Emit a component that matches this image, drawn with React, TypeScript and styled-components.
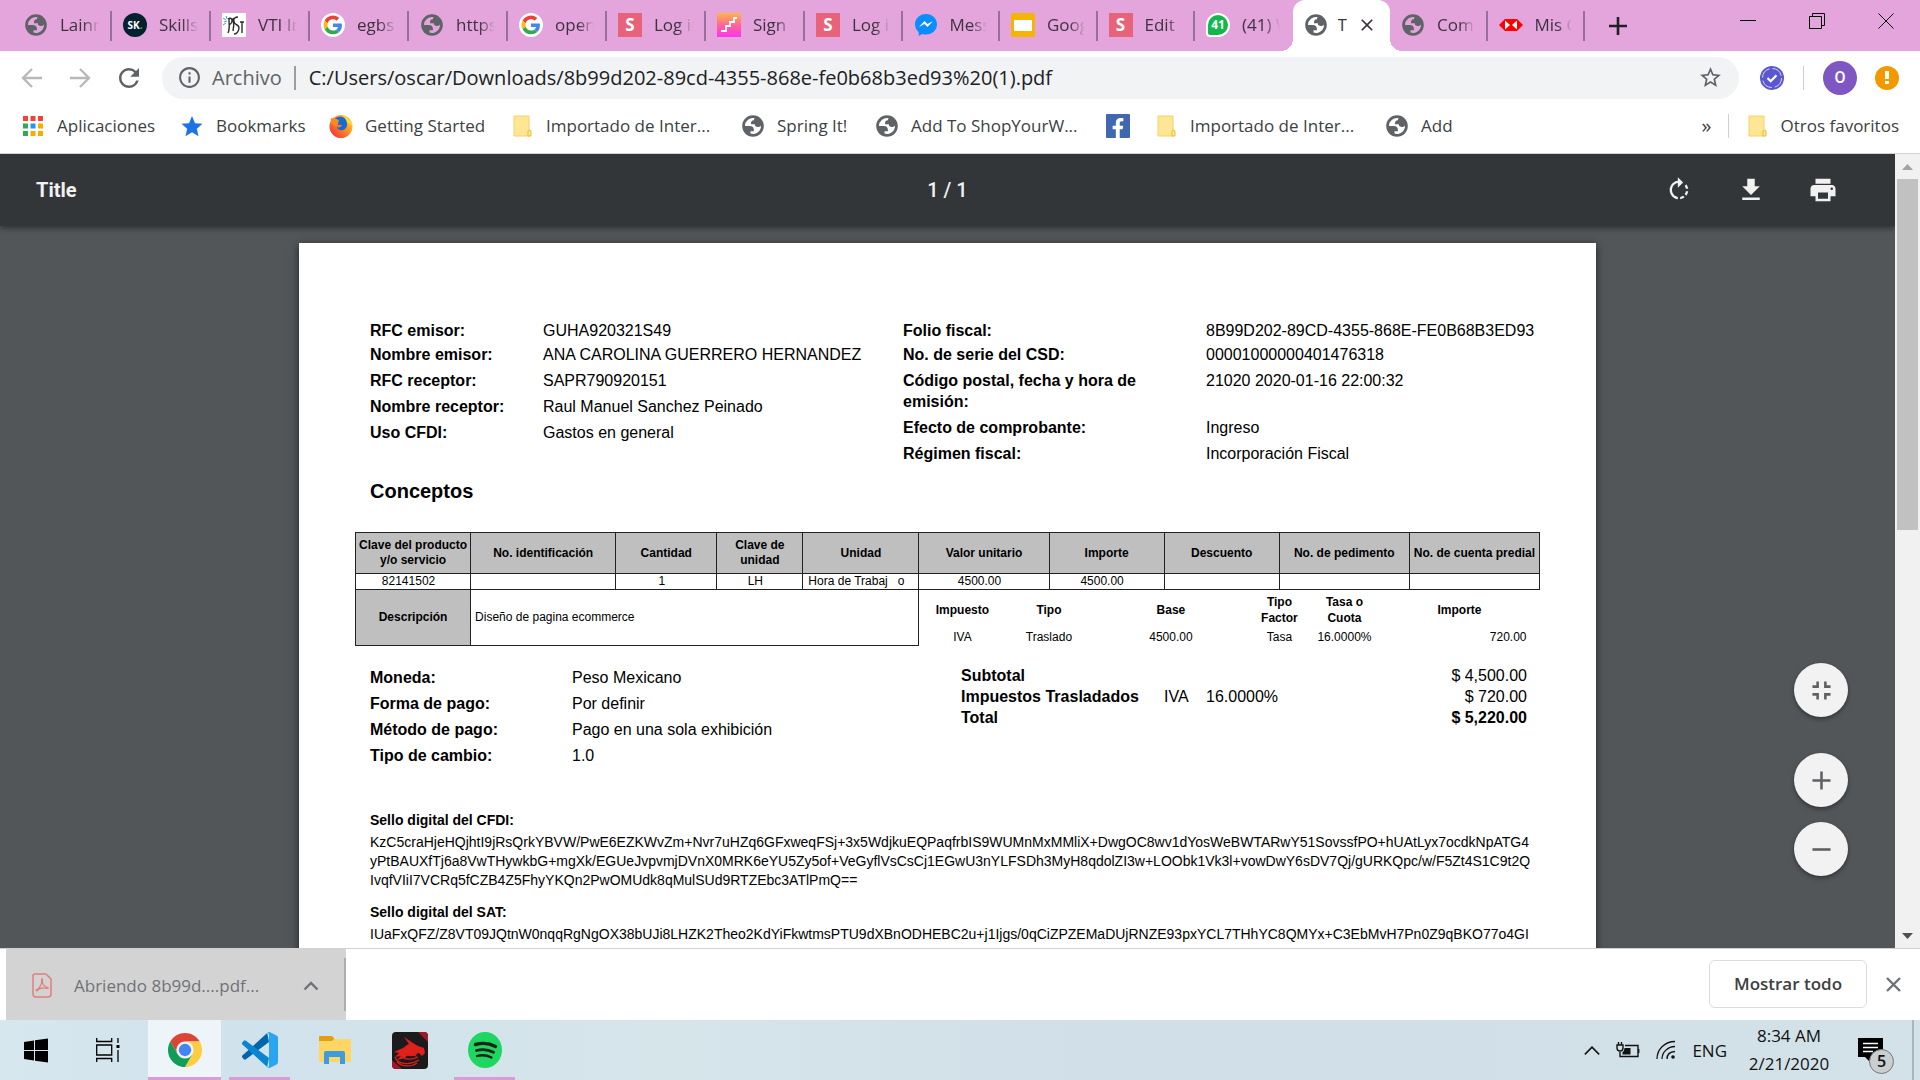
import React from "react";
import styled, { createGlobalStyle, css } from "styled-components";
import { FaFacebookF } from "react-icons/fa";
import { MdStarBorder, MdPrint, MdFileDownload, MdFullscreenExit, MdAdd, MdRemove, MdClose, MdInfoOutline, MdRefresh } from "react-icons/md";

const ui = `"Open Sans", "Noto Sans", sans-serif`;
const arial = `"Liberation Sans", Arial, sans-serif`;

const GlobalStyle = createGlobalStyle`
  * { box-sizing: border-box; }
  html, body { margin: 0; height: 100%; overflow: hidden; }
  body { font-family: ${ui}; font-size: 17px; color: #3c4043; }
  button { font: inherit; color: inherit; border: 0; padding: 0; background: none; }
  svg { display: block; flex: none; }
  dl, dd, h1, h2, h3, p { margin: 0; }
`;

const Screen = styled.div`
  height: 100vh;
  display: flex;
  flex-direction: column;
  background: #fff;
`;

/* ---------- tab strip ---------- */

const TabStrip = styled.header`
  display: flex;
  height: 51px;
  flex: none;
  padding-left: 13px;
  background: #e3a5db;
`;

const Tabs = styled.nav`
  flex: 1;
  max-width: 1572px;
  display: grid;
  grid-template-columns: repeat(8, 198fr) repeat(8, 195fr);
`;

const Tab = styled.button<{ $active?: boolean; $divided?: boolean }>`
  position: relative;
  display: flex;
  align-items: center;
  gap: ${(p) => (p.$active ? 10 : 12)}px;
  min-width: 0;
  padding: 0 13px 2px 11px;
  color: #3d3340;
  text-align: left;
  ${(p) =>
    p.$divided &&
    css`
      &::after {
        content: "";
        position: absolute;
        right: 0;
        top: 11px;
        height: 30px;
        width: 2px;
        background: #96709a;
      }
    `}
  ${(p) =>
    p.$active &&
    css`
      background: #fff;
      border-radius: 12px 12px 0 0;
      &::before,
      &::after {
        content: "";
        position: absolute;
        bottom: 0;
        width: 12px;
        height: 12px;
      }
      &::before {
        left: -12px;
        background: radial-gradient(circle at 0 0, transparent 12px, #fff 12px);
      }
      &::after {
        right: -12px;
        background: radial-gradient(circle at 100% 0, transparent 12px, #fff 12px);
      }
    `}
`;

const TabTitle = styled.span<{ $solid?: boolean }>`
  flex: ${(p) => (p.$solid ? "none" : 1)};
  overflow: hidden;
  white-space: nowrap;
  line-height: 24px;
  ${(p) => !p.$solid && "mask-image: linear-gradient(90deg, #000 60%, transparent);"}
`;

const NewTab = styled.button`
  display: grid;
  place-items: center;
  width: 66px;
  color: #202124;
`;

const WindowControls = styled.div`
  margin-left: auto;
  display: flex;
  height: 42px;
`;

const WindowButton = styled.button`
  width: 69px;
  display: grid;
  place-items: center;
`;

/* ---------- toolbar ---------- */

const Toolbar = styled.div`
  display: flex;
  align-items: center;
  height: 54px;
  flex: none;
  padding: 0 21px 1px 18px;
  color: #5f6368;
`;

const ToolButton = styled.button<{ $dim?: boolean }>`
  width: 48px;
  display: flex;
  opacity: ${(p) => (p.$dim ? 0.45 : 1)};
`;

const Omnibox = styled.form`
  flex: 1;
  display: flex;
  align-items: center;
  height: 42px;
  border-radius: 21px;
  background: #f1f3f4;
  padding: 0 16px 0 15px;
  font-size: 20px;
`;

const OmniLabel = styled.label`
  display: flex;
  align-items: center;
  gap: 10px;
  padding-right: 12px;
`;

const Address = styled.input`
  flex: 1;
  min-width: 0;
  border: 0;
  border-left: 2px solid #9a9da1;
  height: 24px;
  padding: 0 0 0 13px;
  background: none;
  font: inherit;
  color: #202124;
  outline: none;
`;

const ToolbarEnd = styled.div`
  display: flex;
  align-items: center;
  padding-left: 21px;
`;

const Rule = styled.span<{ $space: number }>`
  width: 1px;
  height: 24px;
  margin: 0 ${(p) => p.$space}px;
  background: #ced0d3;
`;

const Avatar = styled.button`
  width: 34px;
  height: 34px;
  margin-right: 18px;
  border-radius: 50%;
  background: #7e57c2;
  color: #fff;
  font: 500 16px Roboto, sans-serif;
`;

const Alert = styled.button`
  width: 24px;
  height: 24px;
  border-radius: 50%;
  background: #f29900;
  display: grid;
  place-items: center;
`;

/* ---------- bookmarks ---------- */

const Bookmarks = styled.nav`
  display: flex;
  align-items: center;
  height: 49px;
  flex: none;
  padding: 0 21px 6px 21px;
  border-bottom: 1px solid #cfd1d3;
`;

const Bookmark = styled.a<{ $w?: number }>`
  display: flex;
  align-items: center;
  gap: 12px;
  flex: none;
  width: ${(p) => (p.$w ? `${p.$w}px` : "auto")};
  color: inherit;
  text-decoration: none;
  white-space: nowrap;
  line-height: 24px;
`;

const Overflow = styled.button`
  margin-left: auto;
  font-size: 20px;
  line-height: 24px;
`;

/* ---------- PDF viewer ---------- */

const Viewer = styled.main`
  flex: 1;
  min-height: 0;
  display: flex;
`;

const Stage = styled.div`
  flex: 1;
  min-width: 0;
  position: relative;
  display: flex;
  flex-direction: column;
  overflow: hidden;
  background: #525659;
`;

const PdfBar = styled.div`
  position: relative;
  z-index: 1;
  flex: none;
  height: 72px;
  padding: 0 36px;
  display: grid;
  grid-template-columns: 1fr auto 1fr;
  align-items: center;
  background: #323639;
  color: #f1f1f1;
  font: 500 20px/24px Roboto, sans-serif;
  box-shadow: 0 2px 6px rgba(0, 0, 0, 0.45);
`;

const PdfTitle = styled.h1`
  font: inherit;
  font-weight: 700;
`;

const PdfActions = styled.div`
  display: flex;
  justify-content: flex-end;
  gap: 42px;
  padding-right: 21px;
`;

const PdfAction = styled.button`
  width: 30px;
  height: 30px;
  display: grid;
  place-items: center;
`;

const Paper = styled.article`
  flex: none;
  align-self: center;
  width: 1297px;
  max-width: 100%;
  margin-top: 17px;
  padding: 77px 56px;
  background: #fff;
  color: #000;
  font: 16px/21px ${arial};
  box-shadow: 0 2px 8px rgba(0, 0, 0, 0.6);
`;

const Heads = styled.section`
  padding: 0 15px;
  display: grid;
  grid-template-columns: 533px 1fr;
`;

const Facts = styled.dl<{ $label: number; $tight?: boolean }>`
  & > div {
    display: grid;
    grid-template-columns: ${(p) => p.$label}px 1fr;
    padding-bottom: 5px;
  }
  ${(p) => p.$tight && "& > div:first-child { padding-bottom: 3px; }"}
  dt {
    font-weight: bold;
    padding-right: 60px;
    white-space: nowrap;
  }
  dd {
    white-space: nowrap;
  }
`;

const Conceptos = styled.h2`
  margin: 10px 15px 29px;
  font: bold 20px/24px ${arial};
`;

const Items = styled.table`
  width: 100%;
  table-layout: fixed;
  border-collapse: collapse;
  font-size: 12px;
  line-height: 15px;
  & > tbody > tr > td,
  & > tbody > tr > th,
  & > thead > tr > th {
    border: 1px solid #222;
    padding: 0;
    text-align: center;
  }
  & > thead > tr > th,
  & > tbody > tr > th {
    background: #bfbfbf;
  }
  & > thead > tr {
    height: 41px;
  }
`;

const ItemRow = styled.tr`
  height: 16px;
  white-space: pre;
  && > td {
    padding-right: 9px;
  }
`;

const DescRow = styled.tr`
  height: 56px;
  && > td {
    text-align: left;
    padding-left: 4px;
  }
  && > td:last-child {
    border-right: 0;
    border-bottom: 0;
    padding: 0;
    vertical-align: top;
  }
`;

const Taxes = styled.table`
  width: 100%;
  table-layout: fixed;
  border-collapse: collapse;
  text-align: center;
  th,
  td {
    padding: 0;
  }
  thead tr {
    height: 40px;
  }
  th {
    line-height: 16px;
  }
  td:last-child {
    text-align: right;
    padding-right: 13px;
  }
`;

const Sums = styled.section`
  margin-top: 19px;
  padding: 0 13px 0 15px;
  display: grid;
  grid-template-columns: 591px 1fr;
`;

const Payment = styled.div`
  padding-top: 2px;
`;

const Totals = styled.table`
  width: 100%;
  align-self: start;
  border-collapse: collapse;
  th,
  td {
    padding: 0;
    text-align: left;
  }
  td:last-child {
    text-align: right;
  }
`;

const Seal = styled.section<{ $first?: boolean }>`
  margin: ${(p) => (p.$first ? 40 : 13)}px 15px 0;
  font-size: 14px;
  h3 {
    font-size: 14px;
    line-height: 18px;
    margin-bottom: 4px;
  }
  p {
    line-height: 19px;
    white-space: nowrap;
  }
`;

const Zoomers = styled.div`
  position: absolute;
  right: 47px;
  bottom: 72px;
  display: flex;
  flex-direction: column;
  gap: 15px;
`;

const RoundButton = styled.button<{ $apart?: boolean }>`
  width: 54px;
  height: 54px;
  margin-bottom: ${(p) => (p.$apart ? 21 : 0)}px;
  border-radius: 50%;
  background: #f2f2f2;
  color: #5f6062;
  display: grid;
  place-items: center;
  box-shadow: 0 2px 4px rgba(0, 0, 0, 0.4);
`;

const ScrollTrack = styled.div`
  width: 25px;
  flex: none;
  display: flex;
  flex-direction: column;
  justify-content: space-between;
  background: #f1f1f1;
`;

const ScrollArrow = styled.button`
  height: 25px;
  display: grid;
  place-items: center;
`;

const ScrollThumb = styled.div`
  width: 21px;
  height: 351px;
  margin: 0 2px auto;
  background: #c1c1c1;
`;

/* ---------- download shelf ---------- */

const Shelf = styled.footer`
  flex: none;
  height: 72px;
  padding: 0 19px 0 6px;
  border-top: 1px solid #cfd1d3;
  display: flex;
  align-items: center;
  background: #fff;
`;

const Download = styled.div`
  position: relative;
  align-self: stretch;
  width: 340px;
  display: flex;
  align-items: center;
  padding: 2px 27px 0 26px;
  background: #d3d3d3;
  color: #6f7276;
  &::after {
    content: "";
    position: absolute;
    right: 0;
    top: 9px;
    bottom: 9px;
    width: 2px;
    background: #adadad;
  }
`;

const DownloadName = styled.button`
  display: flex;
  align-items: center;
  gap: 22px;
  margin-right: auto;
  white-space: nowrap;
`;

const ShowAll = styled.button`
  margin: 0 19px 2px auto;
  width: 158px;
  height: 48px;
  border: 1px solid #dadce0;
  border-radius: 6px;
  font-weight: 600;
  color: #3c4043;
`;

/* ---------- taskbar ---------- */

const Taskbar = styled.footer`
  flex: none;
  height: 60px;
  display: flex;
  background: linear-gradient(90deg, #d6e7ee, #d0e2ec 12%, #d6e5ea 35%, #d0dfe8 60%, #d3e2e8);
  color: #111;
`;

const TaskButton = styled.button<{ $state?: "open" | "front"; $w: number }>`
  width: ${(p) => p.$w}px;
  display: grid;
  place-items: center;
  position: relative;
  background: ${(p) => (p.$state === "front" ? "#eef5f9" : "none")};
  &::after {
    content: "";
    display: ${(p) => (p.$state ? "block" : "none")};
    position: absolute;
    bottom: 0;
    left: ${(p) => (p.$state === "front" ? 0 : 6)}px;
    right: ${(p) => (p.$state === "front" ? 0 : 6)}px;
    height: 3px;
    background: #dd9ad8;
  }
`;

const Apps = styled.div`
  display: flex;
`;

const Pinned = styled.div`
  display: flex;
  gap: 2px;
  padding-left: 4px;
`;

const Tray = styled.div`
  margin-left: auto;
  display: flex;
  align-items: center;
  padding-right: 6px;
`;

const TrayItem = styled.button<{ $gap: number }>`
  margin-right: ${(p) => p.$gap}px;
  position: relative;
`;

const Clock = styled.button`
  width: 94px;
  margin-right: 22px;
  text-align: center;
  line-height: 28px;
  time {
    display: block;
  }
`;

const Count = styled.span`
  position: absolute;
  left: 11px;
  top: 11px;
  width: 25px;
  height: 25px;
  border: 1px solid #777;
  border-radius: 50%;
  background: #c9ced1;
  font: 600 16px/22px ${ui};
  text-align: center;
`;

const PeekEdge = styled.span`
  align-self: stretch;
  width: 2px;
  background: #a9b4bb;
`;

/* ---------- drawings ---------- */

const Globe = () => (
  <svg width="24" height="24" viewBox="0 0 24 24" fill="#5f6368" fillRule="evenodd">
    <path d="M1.2 12C1.2 6 6 1.200 12 1.200S22.800 6 22.800 12 18 22.800 12 22.800 1.200 18 1.200 12zM4 12h4.400c3.407.022 4.922 1.730 4.543 5.127H9.488v2.470a8.004 8.004 0 0 0 10.498-8.080C19.327 12.504 18.332 13 17 13c-2.137 0-3.206-.916-3.206-2.750h-3.748c-.274-2.728.683-4.092 2.870-4.092 0-.975.327-1.597.811-1.970A8.004 8.004 0 0 0 4 12z" />
  </svg>
);

const GoogleG = () => (
  <svg width="24" height="24" viewBox="0 0 24 24">
    <circle cx="12" cy="12" r="12" fill="#fff" />
    <g transform="translate(2.600 2.600) scale(.39)">
      <path fill="#EA4335" d="M24 9.500c3.540 0 6.710 1.220 9.210 3.600l6.850-6.850C35.900 2.380 30.470 0 24 0 14.620 0 6.510 5.380 2.560 13.220l7.980 6.190C12.430 13.720 17.740 9.500 24 9.500z" />
      <path fill="#4285F4" d="M46.980 24.550c0-1.570-.15-3.090-.38-4.550H24v9.020h12.940c-.58 2.960-2.260 5.480-4.780 7.180l7.730 6c4.510-4.180 7.090-10.360 7.090-17.650z" />
      <path fill="#FBBC05" d="M10.530 28.590c-.48-1.450-.76-2.990-.76-4.590s.27-3.140.76-4.590l-7.980-6.190C.92 16.460 0 20.120 0 24s.92 7.540 2.560 10.780l7.970-6.190z" />
      <path fill="#34A853" d="M24 48c6.480 0 11.930-2.130 15.890-5.810l-7.730-6c-2.150 1.450-4.920 2.300-8.160 2.300-6.260 0-11.570-4.220-13.470-9.910l-7.980 6.190C6.510 42.620 14.620 48 24 48z" />
    </g>
  </svg>
);

const Tile = styled.span<{ $bg: string; $round?: boolean; $size?: number }>`
  width: 24px;
  height: 24px;
  flex: none;
  border-radius: ${(p) => (p.$round ? "50%" : "0")};
  background: ${(p) => p.$bg};
  color: #fff;
  font: 700 ${(p) => p.$size || 17}px/24px ${ui};
  text-align: center;
  i {
    font-style: normal;
    color: #1dd05d;
  }
`;

const FacebookTile = styled(Tile)`
  display: flex;
  align-items: flex-end;
  justify-content: flex-end;
  padding-right: 2px;
  border-radius: 1px;
`;

const SkIcon = () => (
  <Tile $bg="#05202e" $round $size={10}>
    SK<i>.</i>
  </Tile>
);
const SIcon = () => <Tile $bg="#e8637a">S</Tile>;

const VtiIcon = () => (
  <svg width="24" height="24" viewBox="0 0 24 24" fill="none" stroke="#2b2b2b">
    <rect width="24" height="24" fill="#fff" stroke="none" />
    <path d="M6 6c4-3 6 3 1 6M7 6c0 6 1 10-1 14M16 4c-6 0-5 6-1 8s1 9-3 9M20 9v11M18 9h4M11 5c1 5 1 9 0 13" strokeWidth="1.400" />
    <path d="M1 5l3 2M2 9l3-1M4 3l1 3M1 12l3-2" stroke="#4a9fb5" />
  </svg>
);

const StairIcon = () => (
  <svg width="24" height="24" viewBox="0 0 24 24">
    <defs>
      <linearGradient id="stair" x2="0" y2="1">
        <stop offset="0" stopColor="#ffb648" />
        <stop offset=".55" stopColor="#ff5f9e" />
        <stop offset="1" stopColor="#ff35f0" />
      </linearGradient>
    </defs>
    <rect width="24" height="24" fill="url(#stair)" />
    <path d="M4 18h5v-5h4V9h4V5h3" fill="none" stroke="#fff" strokeWidth="1.800" />
  </svg>
);

const Messenger = () => (
  <svg width="24" height="24" viewBox="0 0 24 24">
    <path d="M12 1C5.800 1 1 5.500 1 11.300c0 3.200 1.400 6 3.700 7.900V23l3.600-2c1.100.4 2.400.5 3.700.5 6.200 0 11-4.500 11-10.200S18.200 1 12 1z" fill="#0a8dff" />
    <path d="M5 14l5.500-6 3 3L19 8l-5.500 6-3-3z" fill="#fff" />
  </svg>
);

const Slides = () => (
  <svg width="24" height="24" viewBox="0 0 24 24">
    <rect width="24" height="24" rx="2" fill="#f5b400" />
    <rect x="3" y="7" width="18" height="11" fill="#fff" />
  </svg>
);

const WhatsBadge = styled(Tile)`
  border: 2px solid #fff;
  border-bottom-left-radius: 4px;
  line-height: 20px;
`;

const Hsbc = () => (
  <svg width="24" height="24" viewBox="0 0 24 24">
    <path d="M6 6h12l6 6-6 6H6l-6-6z" fill="#f00" />
    <path d="M6 7.500l5 4.500-5 4.500zM18 7.500v9L13 12z" fill="#fff" />
  </svg>
);

const Folder = () => (
  <svg width="24" height="24" viewBox="0 0 24 24">
    <path d="M4 2h15v20H4z" fill="#ffe694" stroke="#f5d265" />
    <path d="M18 22v-5q2-2 3 0v5z" fill="#ffe694" stroke="#e8bd3a" />
  </svg>
);

const Firefox = () => (
  <svg width="24" height="24" viewBox="0 0 24 24">
    <defs>
      <linearGradient id="fox" x1="1" y1="0" x2="0" y2="1">
        <stop offset="0" stopColor="#ffe14a" />
        <stop offset=".4" stopColor="#ff9a1f" />
        <stop offset="1" stopColor="#f0203c" />
      </linearGradient>
    </defs>
    <circle cx="12" cy="12.500" r="11.500" fill="url(#fox)" />
    <path d="M15 0c0 4 8 5 8.500 12L17 8z" fill="#ffd93b" />
    <path d="M6 5C9 1 15 2 17 6c2 4 1 9-3 10-3 1-6-1-6-3 2 1 4 0 5-2H9C8 9 9 8 10 7 9 5 7 5 6 5z" fill="#1769d8" />
    <path d="M2 4l4 2c3 0 4 2 3 4L6 12C3 11 1 8 2 4z" fill="#ff8a1c" />
  </svg>
);

const appColors = ["#f44336", "#f44336", "#f44336", "#34a853", "#2196f3", "#fbab00", "#34a853", "#fbab00", "#fbab00"];
const AppsGrid = () => (
  <svg width="24" height="24" viewBox="0 0 24 24">
    {appColors.map((c, i) => (
      <rect key={i} x={2 + (i % 3) * 7.5} y={2 + Math.floor(i / 3) * 7.5} width="5" height="5" fill={c} />
    ))}
  </svg>
);

const Arrow = ({ flip }: { flip?: boolean }) => (
  <svg width="28" height="28" viewBox="0 0 28 28" fill="none" stroke="#5f6368" strokeWidth="2.400">
    <path d={flip ? "M4 14h19M14 5l9 9-9 9" : "M24 14H5M14 5l-9 9 9 9"} />
  </svg>
);

const RotateIcon = () => (
  <svg width="28" height="28" viewBox="0 0 24 24" fill="#f1f1f1">
    <path d="M15.550 5.550L11 1v3.070C7.060 4.560 4 7.920 4 12s3.050 7.440 7 7.930v-2.020c-2.840-.48-5-2.940-5-5.910s2.160-5.430 5-5.910V10l4.550-4.450zM19.930 11c-.17-1.390-.72-2.730-1.620-3.890l-1.420 1.420c.54.75.88 1.600 1.020 2.470h2.020zM13 17.900v2.020c1.390-.17 2.740-.71 3.900-1.610l-1.440-1.440c-.75.540-1.590.890-2.460 1.030zm3.890-2.420l1.420 1.410c.9-1.160 1.450-2.500 1.620-3.890h-2.020c-.14.870-.48 1.720-1.020 2.480z" />
  </svg>
);

const PdfFile = () => (
  <svg width="20" height="25" viewBox="0 0 20 25" fill="none" stroke="#e07f7c" strokeWidth="1.500">
    <path d="M3 1h11l5 5v15q0 3-3 3H4q-3 0-3-3V3q0-2 2-2z" />
    <path d="M4 17c6-3 6-7 5.500-10.500 0-1 1.500-1 1 1C10 11 12 14 16 14.500c1 1-1 1.500-3 .5-3-.5-6 .5-8 3-1 0-1-.5-1-1z" strokeWidth="1.100" />
  </svg>
);

const Caret = ({ w, t }: { w: number; t: number }) => (
  <svg width={w} height={w / 2 + 2} viewBox="0 0 16 10" fill="none" stroke="currentColor" strokeWidth={t}>
    <path d="M1.500 8.500L8 2l6.500 6.500" />
  </svg>
);

const WinLogo = () => (
  <svg width="24" height="25" viewBox="0 0 24 25" fill="#000">
    <path d="M0 4l10-1.500V12H0zM11 2.300L24 .5V12H11zM0 13h10v9.500L0 21zM11 13h13v11.500L11 22.700z" />
  </svg>
);

const TaskView = () => (
  <svg width="24" height="24" viewBox="0 0 24 24" fill="none" stroke="#000" strokeWidth="1.300">
    <path d="M.7 0v3.500h15V0M.7 24v-3.500h15V24M.7 7h15v10H.7zM22 0v5M22 12v12" />
    <rect x="20.500" y="7" width="3" height="3" fill="#000" stroke="none" />
  </svg>
);

const ChromeLogo = () => (
  <svg width="34" height="34" viewBox="2 2 44 44">
    <path d="M4.950 13A22 22 0 0 1 43.050 13H24A11 11 0 0 0 14.470 29.500z" fill="#db4437" />
    <path d="M43.050 13A22 22 0 0 1 24 46L33.530 29.500A11 11 0 0 0 24 13z" fill="#ffcd40" />
    <path d="M24 46A22 22 0 0 1 4.950 13L14.470 29.500A11 11 0 0 0 33.530 29.500z" fill="#0f9d58" />
    <circle cx="24" cy="24" r="10.500" fill="#f1f1f1" />
    <circle cx="24" cy="24" r="8" fill="#4285f4" />
  </svg>
);

const VsCode = () => (
  <svg width="36" height="36" viewBox="0 0 100 100">
    <path d="M75 28L11 76q-3 2-6 0l-4-5q-3-3 0-6L70 3z" fill="#0065a9" />
    <path d="M75 72L11 24q-3-2-6 0l-4 5q-3 3 0 6l69 62z" fill="#0a86d1" />
    <path d="M70 3q4-4 8-2l18 9q4 2 4 6v68q0 4-4 6l-18 9q-4 2-8-2 5 2 5-4V7q0-6-5-4z" fill="#2aa5f2" />
  </svg>
);

const Explorer = () => (
  <svg width="32" height="28" viewBox="0 0 32 28">
    <path d="M0 1q0-1 1-1h12l2 2v3H0z" fill="#e0a010" />
    <path d="M0 5h13l2-2h16q1 0 1 1v21q0 1-1 1H1q-1 0-1-1z" fill="#ffd664" />
    <path d="M5 28V17q0-2 2-2h17q2 0 2 2v11h-5v-7H10v7z" fill="#3d9be0" />
  </svg>
);

const Dragon = () => (
  <svg width="36" height="37" viewBox="0 0 36 37">
    <rect width="36" height="37" rx="4" fill="#1c1a1b" />
    <path d="M26 0h6q4 0 4 4v6zM0 28v5q0 4 4 4h6z" fill="#a01828" />
    <path d="M2 20l9-4 4-3 2-1-5-7 9 6 5 3 6 2 1 5-3 3-3-3-4 1 2 3-5-2c-4 0-6 1-7 3l-8 2 4-4-6 1 4-4z" fill="#e0201b" />
    <path d="M3 25c2 7 14 9 24 3M5 30c5 5 15 5 20 1M9 24c4 4 11 4 17 1M14 22c3 2 7 2 11 0" fill="none" stroke="#d81f1b" strokeWidth="1.300" />
  </svg>
);

const Spotify = () => (
  <svg width="34" height="36" viewBox="0 0 34 36" fill="none" stroke="#14221a" strokeLinecap="round">
    <ellipse cx="17" cy="18" rx="17" ry="18" fill="#1ed760" stroke="none" />
    <path d="M7.500 12.500c7-2 14-1.300 20 2" strokeWidth="3.400" />
    <path d="M8.500 18.500c6-1.600 12-1 17 1.800" strokeWidth="2.800" />
    <path d="M9 24c5-1.300 10-.8 14.500 1.500" strokeWidth="2.300" />
  </svg>
);

const Battery = () => (
  <svg width="25" height="18" viewBox="0 0 25 18" fill="none" stroke="#111" strokeWidth="1.400">
    <path d="M9 4.500h13v11H4V11M22.700 8v4M1 4h6v3q0 3-3 3t-3-3zM2.500 1v3M5.500 1v3" />
    <path d="M8.500 7h6v6.500h-8V11q2-1 2-4z" fill="#111" stroke="none" />
  </svg>
);

const Wifi = () => (
  <svg width="20" height="20" viewBox="0 0 20 20" fill="none" stroke="#111" strokeWidth="1.300">
    <path d="M1 19C1 9 9 1.500 19 1.500M6 19C6 12 12 6.500 19 6.500M11 19q0-7 8-7.500" />
    <circle cx="17" cy="17" r="1.800" fill="#111" stroke="none" />
  </svg>
);

const Note = () => (
  <svg width="25" height="24" viewBox="0 0 25 24">
    <path d="M0 0h25v19H14l-2 5-5-5H0z" fill="#000" />
    <path d="M5 5.500h15M5 9.500h15M5 13.500h10" stroke="#fff" strokeWidth="1.300" />
  </svg>
);

const SecureBadge = () => (
  <svg width="24" height="24" viewBox="0 0 24 24" fill="none">
    <circle cx="12" cy="12" r="12" fill="#5a57d0" />
    <circle cx="12" cy="12" r="9.500" stroke="#d7d6f7" strokeDasharray="12 3" />
    <path d="M7.500 12l3.200 3.200 5.800-6" stroke="#fff" strokeWidth="2.200" />
  </svg>
);

/* ---------- data ---------- */

const tabs: { title: string; icon: React.ReactNode; active?: boolean; divided?: boolean }[] = [
  { title: "Lainn", icon: <Globe />, divided: true },
  { title: "Skills", icon: <SkIcon />, divided: true },
  { title: "VTI In", icon: <VtiIcon />, divided: true },
  { title: "egbs", icon: <GoogleG />, divided: true },
  { title: "https", icon: <Globe />, divided: true },
  { title: "open", icon: <GoogleG />, divided: true },
  { title: "Log in", icon: <SIcon />, divided: true },
  { title: "Sign", icon: <StairIcon />, divided: true },
  { title: "Log in", icon: <SIcon />, divided: true },
  { title: "Mess", icon: <Messenger />, divided: true },
  { title: "Goog", icon: <Slides />, divided: true },
  { title: "Edit", icon: <SIcon />, divided: true },
  { title: "(41) W", icon: <WhatsBadge $bg="#12b84a" $round $size={12}>41</WhatsBadge> },
  { title: "T", icon: <Globe />, active: true },
  { title: "Com", icon: <Globe />, divided: true },
  { title: "Mis C", icon: <Hsbc />, divided: true },
];

const bookmarks: { label?: string; icon: React.ReactNode; w: number }[] = [
  { label: "Aplicaciones", icon: <AppsGrid />, w: 159 },
  {
    label: "Bookmarks",
    w: 149,
    icon: (
      <svg width="24" height="24" viewBox="0 0 24 24" fill="#1a73e8">
        <path d="M12 2l3 7.200 7.500.6-5.700 5 1.700 7.500L12 18.300l-6.500 4 1.700-7.500-5.700-5L9 9.200z" />
      </svg>
    ),
  },
  { label: "Getting Started", icon: <Firefox />, w: 181 },
  { label: "Importado de Inter...", icon: <Folder />, w: 231 },
  { label: "Spring It!", icon: <Globe />, w: 134 },
  { label: "Add To ShopYourW...", icon: <Globe />, w: 231 },
  { icon: <FacebookTile $bg="#4267b2"><FaFacebookF size={20} /></FacebookTile>, w: 48 },
  { label: "Importado de Inter...", icon: <Folder />, w: 231 },
  { label: "Add", icon: <Globe />, w: 80 },
];

const emisor = [
  ["RFC emisor:", "GUHA920321S49"],
  ["Nombre emisor:", "ANA CAROLINA GUERRERO HERNANDEZ"],
  ["RFC receptor:", "SAPR790920151"],
  ["Nombre receptor:", "Raul Manuel Sanchez Peinado"],
  ["Uso CFDI:", "Gastos en general"],
];
const folio = [
  ["Folio fiscal:", "8B99D202-89CD-4355-868E-FE0B68B3ED93"],
  ["No. de serie del CSD:", "00001000000401476318"],
  ["Código postal, fecha y hora de\nemisión:", "21020 2020-01-16 22:00:32"],
  ["Efecto de comprobante:", "Ingreso"],
  ["Régimen fiscal:", "Incorporación Fiscal"],
];
const pago = [
  ["Moneda:", "Peso Mexicano"],
  ["Forma de pago:", "Por definir"],
  ["Método de pago:", "Pago en una sola exhibición"],
  ["Tipo de cambio:", "1.0"],
];

const columns: [string, number][] = [
  ["Clave del producto\ny/o servicio", 115],
  ["No. identificación", 145],
  ["Cantidad", 101],
  ["Clave de\nunidad", 86],
  ["Unidad", 116],
  ["Valor unitario", 130],
  ["Importe", 115],
  ["Descuento", 115],
  ["No. de pedimento", 130],
  ["No. de cuenta predial", 130],
];
const item = ["82141502", "", "1", "LH", "Hora de Trabaj\u00a0\u00a0\u00a0o", "4500.00", "4500.00", "", "", ""];

const taxColumns: [string, number][] = [
  ["Impuesto", 86],
  ["Tipo", 87],
  ["Base", 157],
  ["Tipo\nFactor", 60],
  ["Tasa o\nCuota", 70],
  ["Importe", 160],
];
const tax = ["IVA", "Traslado", "4500.00", "Tasa", "16.0000%", "720.00"];

const Lines = ({ text }: { text: string }) => (
  <>
    {text.split("\n").map((l, i) => (
      <React.Fragment key={i}>
        {i > 0 && <br />}
        {l}
      </React.Fragment>
    ))}
  </>
);

const FactList = ({ rows, label, tight }: { rows: string[][]; label: number; tight?: boolean }) => (
  <Facts $label={label} $tight={tight}>
    {rows.map(([k, v]) => (
      <div key={k}>
        <dt>
          <Lines text={k} />
        </dt>
        <dd>{v}</dd>
      </div>
    ))}
  </Facts>
);

export default function App() {
  return (
    <Screen>
      <GlobalStyle />
      <TabStrip>
        <Tabs>
          {tabs.map((t, i) => (
            <Tab key={i} $active={t.active} $divided={t.divided}>
              {t.icon}
              <TabTitle $solid={t.active}>{t.title}</TabTitle>
              {t.active && <MdClose size={20} />}
            </Tab>
          ))}
        </Tabs>
        <NewTab aria-label="Nueva pestaña">
          <svg width="18" height="18" viewBox="0 0 18 18" stroke="currentColor" strokeWidth="2.600">
            <path d="M9 0v18M0 9h18" />
          </svg>
        </NewTab>
        <WindowControls>
          <WindowButton aria-label="Minimizar">
            <svg width="16" height="16" stroke="#000"><path d="M0 7.500h16" /></svg>
          </WindowButton>
          <WindowButton aria-label="Restaurar">
            <svg width="16" height="16" fill="none" stroke="#000"><path d="M.5 3.500h12v12H.5zM3.500 3.500v-3h12v12h-3" /></svg>
          </WindowButton>
          <WindowButton aria-label="Cerrar">
            <svg width="16" height="16" stroke="#000"><path d="M.5.5l15 15M15.500.5l-15 15" /></svg>
          </WindowButton>
        </WindowControls>
      </TabStrip>

      <Toolbar>
        <ToolButton $dim aria-label="Atrás"><Arrow /></ToolButton>
        <ToolButton $dim aria-label="Adelante"><Arrow flip /></ToolButton>
        <ToolButton aria-label="Recargar"><MdRefresh size={30} /></ToolButton>
        <Omnibox>
          <OmniLabel htmlFor="address">
            <MdInfoOutline size={25} />
            Archivo
          </OmniLabel>
          <Address id="address" readOnly value="C:/Users/oscar/Downloads/8b99d202-89cd-4355-868e-fe0b68b3ed93%20(1).pdf" />
          <MdStarBorder size={25} />
        </Omnibox>
        <ToolbarEnd>
          <SecureBadge />
          <Rule $space={19} />
          <Avatar>O</Avatar>
          <Alert aria-label="Actualizar">
            <svg width="4" height="13" fill="#fff"><path d="M0 0h4v8H0zM0 10h4v3H0z" /></svg>
          </Alert>
        </ToolbarEnd>
      </Toolbar>

      <Bookmarks>
        {bookmarks.map((b, i) => (
          <Bookmark key={i} href="#" $w={b.w} aria-label={b.label || "Facebook"}>
            {b.icon}
            {b.label}
          </Bookmark>
        ))}
        <Overflow>»</Overflow>
        <Rule $space={16} />
        <Bookmark href="#">
          <Folder />
          Otros favoritos
        </Bookmark>
      </Bookmarks>

      <Viewer>
        <Stage>
          <PdfBar>
            <PdfTitle>Title</PdfTitle>
            <span>1 / 1</span>
            <PdfActions>
              <PdfAction aria-label="Girar"><RotateIcon /></PdfAction>
              <PdfAction aria-label="Descargar"><MdFileDownload size={30} /></PdfAction>
              <PdfAction aria-label="Imprimir"><MdPrint size={30} /></PdfAction>
            </PdfActions>
          </PdfBar>
          <Paper>
            <Heads>
              <FactList rows={emisor} label={173} tight />
              <FactList rows={folio} label={303} tight />
            </Heads>
            <Conceptos>Conceptos</Conceptos>
            <Items>
              <colgroup>
                {columns.map(([n, w]) => <col key={n} width={w} />)}
              </colgroup>
              <thead>
                <tr>
                  {columns.map(([n]) => <th key={n}><Lines text={n} /></th>)}
                </tr>
              </thead>
              <tbody>
                <ItemRow>
                  {item.map((v, i) => <td key={i}>{v}</td>)}
                </ItemRow>
                <DescRow>
                  <th>Descripción</th>
                  <td colSpan={4}>Diseño de pagina ecommerce</td>
                  <td colSpan={5}>
                    <Taxes>
                      <colgroup>
                        {taxColumns.map(([n, w]) => <col key={n} width={w} />)}
                      </colgroup>
                      <thead>
                        <tr>{taxColumns.map(([n]) => <th key={n}><Lines text={n} /></th>)}</tr>
                      </thead>
                      <tbody>
                        <tr>{tax.map((v) => <td key={v}>{v}</td>)}</tr>
                      </tbody>
                    </Taxes>
                  </td>
                </DescRow>
              </tbody>
            </Items>
            <Sums>
              <Payment>
                <FactList rows={pago} label={202} />
              </Payment>
              <Totals>
                <colgroup>
                  <col width={203} />
                  <col width={42} />
                  <col />
                  <col />
                </colgroup>
                <tbody>
                  <tr><th colSpan={3}>Subtotal</th><td>$ 4,500.00</td></tr>
                  <tr><th>Impuestos Trasladados</th><td>IVA</td><td>16.0000%</td><td>$ 720.00</td></tr>
                  <tr><th colSpan={3}>Total</th><td><b>$ 5,220.00</b></td></tr>
                </tbody>
              </Totals>
            </Sums>
            <Seal $first>
              <h3>Sello digital del CFDI:</h3>
              <p>
                KzC5craHjeHQjhtI9jRsQrkYBVW/PwE6EZKWvZm+Nvr7uHZq6GFxweqFSj+3x5WdjkuEQPaqfrbIS9WUMnMxMMliX+DwgOC8wv1dYosWeBWTARwY51SovssfPO+hUAtLyx7ocdkNpATG4
                <br />
                yPtBAUXfTj6a8VwTHywkbG+mgXk/EGUeJvpvmjDVnX0MRK6eYU5Zy5of+VeGyflVsCsCj1EGwU3nYLFSDh3MyH8qdolZI3w+LOObk1Vk3l+vowDwY6sDV7Qj/gURKQpc/w/F5Zt4S1C9t2Q
                <br />
                IvqfVIiI7VCRq5fCZB4Z5FhyYKQn2PwOMUdk8qMulSUd9RTZEbc3ATlPmQ==
              </p>
            </Seal>
            <Seal>
              <h3>Sello digital del SAT:</h3>
              <p>
                IUaFxQFZ/Z8VT09JQtnW0nqqRgNgOX38bUJi8LHZK2Theo2KdYiFkwtmsPTU9dXBnODHEBC2u+j1Ijgs/0qCiZPZEMaDUjRNZE93pxYCL7THhYC8QMYx+C3EbMvH7Pn0Z9qBKO77o4GI
              </p>
            </Seal>
          </Paper>
          <Zoomers>
            <RoundButton $apart aria-label="Ajustar"><MdFullscreenExit size={31} /></RoundButton>
            <RoundButton aria-label="Acercar"><MdAdd size={31} /></RoundButton>
            <RoundButton aria-label="Alejar"><MdRemove size={31} /></RoundButton>
          </Zoomers>
        </Stage>
        <ScrollTrack>
          <ScrollArrow aria-label="Arriba"><svg width="11" height="6" fill="#a3a3a3"><path d="M0 6l5.500-6L11 6z" /></svg></ScrollArrow>
          <ScrollThumb />
          <ScrollArrow aria-label="Abajo"><svg width="11" height="6" fill="#505050"><path d="M0 0l5.500 6L11 0z" /></svg></ScrollArrow>
        </ScrollTrack>
      </Viewer>

      <Shelf>
        <Download>
          <DownloadName>
            <PdfFile />
            Abriendo 8b99d....pdf...
          </DownloadName>
          <Caret w={16} t={2.4} />
        </Download>
        <ShowAll>Mostrar todo</ShowAll>
        <button aria-label="Cerrar barra">
          <svg width="15" height="15" viewBox="0 0 15 15" stroke="#6f7276" strokeWidth="2.400"><path d="M1 1l13 13M14 1L1 14" /></svg>
        </button>
      </Shelf>

      <Taskbar>
        <Apps>
          <TaskButton $w={72} aria-label="Inicio"><WinLogo /></TaskButton>
          <TaskButton $w={72} aria-label="Vista de tareas"><TaskView /></TaskButton>
          <Pinned>
            <TaskButton $w={73} $state="front" aria-label="Chrome"><ChromeLogo /></TaskButton>
            <TaskButton $w={73} $state="open" aria-label="Visual Studio Code"><VsCode /></TaskButton>
            <TaskButton $w={73} aria-label="Explorador"><Explorer /></TaskButton>
            <TaskButton $w={73} aria-label="Dragon"><Dragon /></TaskButton>
            <TaskButton $w={73} $state="open" aria-label="Spotify"><Spotify /></TaskButton>
          </Pinned>
        </Apps>
        <Tray>
          <TrayItem $gap={15} aria-label="Iconos ocultos"><Caret w={18} t={1.4} /></TrayItem>
          <TrayItem $gap={15} aria-label="Batería"><Battery /></TrayItem>
          <TrayItem $gap={16} aria-label="Red"><Wifi /></TrayItem>
          <TrayItem $gap={15}>ENG</TrayItem>
          <Clock>
            <time>8:34 AM</time>
            <time>2/21/2020</time>
          </Clock>
          <TrayItem $gap={29}>
            <Note />
            <Count>5</Count>
          </TrayItem>
          <PeekEdge />
        </Tray>
      </Taskbar>
    </Screen>
  );
}
